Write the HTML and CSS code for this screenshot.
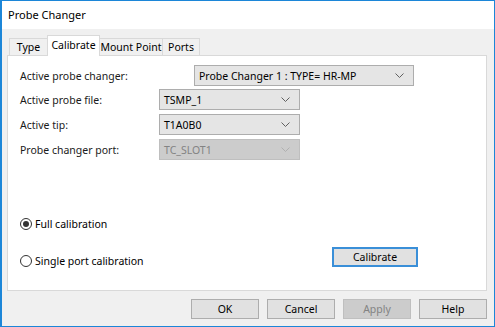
FILE: index.html
```html
<!DOCTYPE html>
<html>
<head>
<meta charset="utf-8">
<link rel="stylesheet" href="styles.css">
</head>
<body>
<div class="window">
  <div class="titlebar">Probe Changer</div>
  <div class="body">
    <div class="tabs">
      <div class="tab t-type">Type</div>
      <div class="tab t-cal active">Calibrate</div>
      <div class="tab t-mount">Mount Point</div>
      <div class="tab t-ports">Ports</div>
    </div>
    <div class="panel">
      <div class="row">
        <div class="label wide">Active probe changer:</div>
        <div class="combo c-wide"><span>Probe Changer 1 : TYPE= HR-MP</span><svg class="chev" width="9" height="5" viewBox="0 0 9 5"><path d="M0.5 0.5 L4.5 4.5 L8.5 0.5" fill="none" stroke="#606060" stroke-width="1"/></svg></div>
      </div>
      <div class="row">
        <div class="label">Active probe file:</div>
        <div class="combo"><span>TSMP_1</span><svg class="chev" width="9" height="5" viewBox="0 0 9 5"><path d="M0.5 0.5 L4.5 4.5 L8.5 0.5" fill="none" stroke="#606060" stroke-width="1"/></svg></div>
      </div>
      <div class="row">
        <div class="label">Active tip:</div>
        <div class="combo"><span>T1A0B0</span><svg class="chev" width="9" height="5" viewBox="0 0 9 5"><path d="M0.5 0.5 L4.5 4.5 L8.5 0.5" fill="none" stroke="#606060" stroke-width="1"/></svg></div>
      </div>
      <div class="row">
        <div class="label">Probe changer port:</div>
        <div class="combo disabled"><span>TC_SLOT1</span><svg class="chev" width="9" height="5" viewBox="0 0 9 5"><path d="M0.5 0.5 L4.5 4.5 L8.5 0.5" fill="none" stroke="#b0b0b0" stroke-width="1"/></svg></div>
      </div>
      <div class="radio-row first">
        <span class="radio checked"></span><span class="rlabel">Full calibration</span>
      </div>
      <div class="radio-row last">
        <div class="radio-item"><span class="radio"></span><span class="rlabel">Single port calibration</span></div>
        <div class="btn default">Calibrate</div>
      </div>
    </div>
    <div class="buttons">
      <div class="btn">OK</div>
      <div class="btn">Cancel</div>
      <div class="btn disabled">Apply</div>
      <div class="btn">Help</div>
    </div>
  </div>
</div>
</body>
</html>
```

FILE: styles.css
```css
html, body {
  margin: 0;
  padding: 0;
}
body {
  font-family: "Noto Sans", "Open Sans", sans-serif;
  font-size: 10.5px;
  line-height: 14px;
  color: #000;
  background: #fff;
  white-space: nowrap;
}
.window {
  width: 495px;
  height: 327px;
  box-sizing: border-box;
  border: 1px solid #1c86d8;
  border-left-width: 2px;
  display: flex;
  flex-direction: column;
  background: #f0f0f0;
}
.titlebar {
  height: 28px;
  background: #fff;
  padding-left: 6px;
  display: flex;
  align-items: center;
  font-size: 11px;
}
.body {
  flex: 1;
  padding: 6px 7px 0 5px;
  display: flex;
  flex-direction: column;
}
.tabs {
  display: flex;
  align-items: flex-end;
  height: 21px;
  padding-left: 2px;
  margin-bottom: -1px;
  position: relative;
  z-index: 1;
}
.tab {
  box-sizing: border-box;
  height: 17px;
  margin-bottom: 1px;
  border-top: 1px solid #d9d9d9;
  background: #f0f0f0;
  display: flex;
  align-items: center;
  justify-content: center;
  padding-bottom: 1px;
}
.t-type { width: 38px; border-left: 1px solid #d9d9d9; }
.t-cal { width: 53px; }
.t-mount { width: 63px; border-right: 1px solid #d9d9d9; }
.t-ports { width: 37px; border-right: 1px solid #d9d9d9; }
.tab.active {
  height: 21px;
  margin-bottom: 0;
  background: #fff;
  border: 1px solid #d9d9d9;
  border-bottom: none;
  padding-bottom: 3px;
}
.panel {
  box-sizing: border-box;
  height: 236px;
  background: #fff;
  border: 1px solid #d9d9d9;
  padding: 9px 0 0 12px;
  display: flex;
  flex-direction: column;
}
.row {
  display: flex;
  align-items: center;
  height: 21px;
  margin-bottom: 4px;
}
.row:first-child { margin-bottom: 3px; }
.label {
  width: 139px;
  color: #1a1a1a;
}
.label.wide { width: 174px; }
.combo {
  box-sizing: border-box;
  width: 141px;
  height: 21px;
  background: #e5e5e5;
  border: 1px solid #adadad;
  display: flex;
  align-items: center;
  justify-content: space-between;
  padding: 0 9px 0 4px;
}
.combo.c-wide { width: 220px; }
.combo.disabled {
  background: #cccccc;
  border-color: #bfbfbf;
  color: #838383;
}
.radio-row {
  display: flex;
  align-items: center;
  height: 14px;
}
.radio-row.first {
  margin-top: 53px;
}
.radio-row.last {
  height: 21px;
  margin-top: 16px;
  align-items: flex-end;
  width: 398px;
  justify-content: space-between;
}
.radio-item {
  display: flex;
  align-items: center;
  height: 14px;
}
.radio {
  box-sizing: border-box;
  width: 12px;
  height: 12px;
  border: 1px solid #333;
  border-radius: 50%;
  background: #fff;
  margin-right: 3px;
  display: flex;
  align-items: center;
  justify-content: center;
}
.radio.checked::after {
  content: "";
  width: 6px;
  height: 6px;
  border-radius: 50%;
  background: #333;
}
.btn {
  box-sizing: border-box;
  width: 68px;
  height: 20px;
  background: #e1e1e1;
  border: 1px solid #adadad;
  display: flex;
  align-items: center;
  justify-content: center;
}
.btn.default {
  width: 86px;
  border: 2px solid #3a8fd8;
  margin-bottom: 1px;
}
.btn.disabled {
  background: #cccccc;
  border-color: #bfbfbf;
  color: #838383;
}
.buttons {
  display: flex;
  justify-content: flex-end;
  gap: 8px;
  margin-top: 8px;
}
```
